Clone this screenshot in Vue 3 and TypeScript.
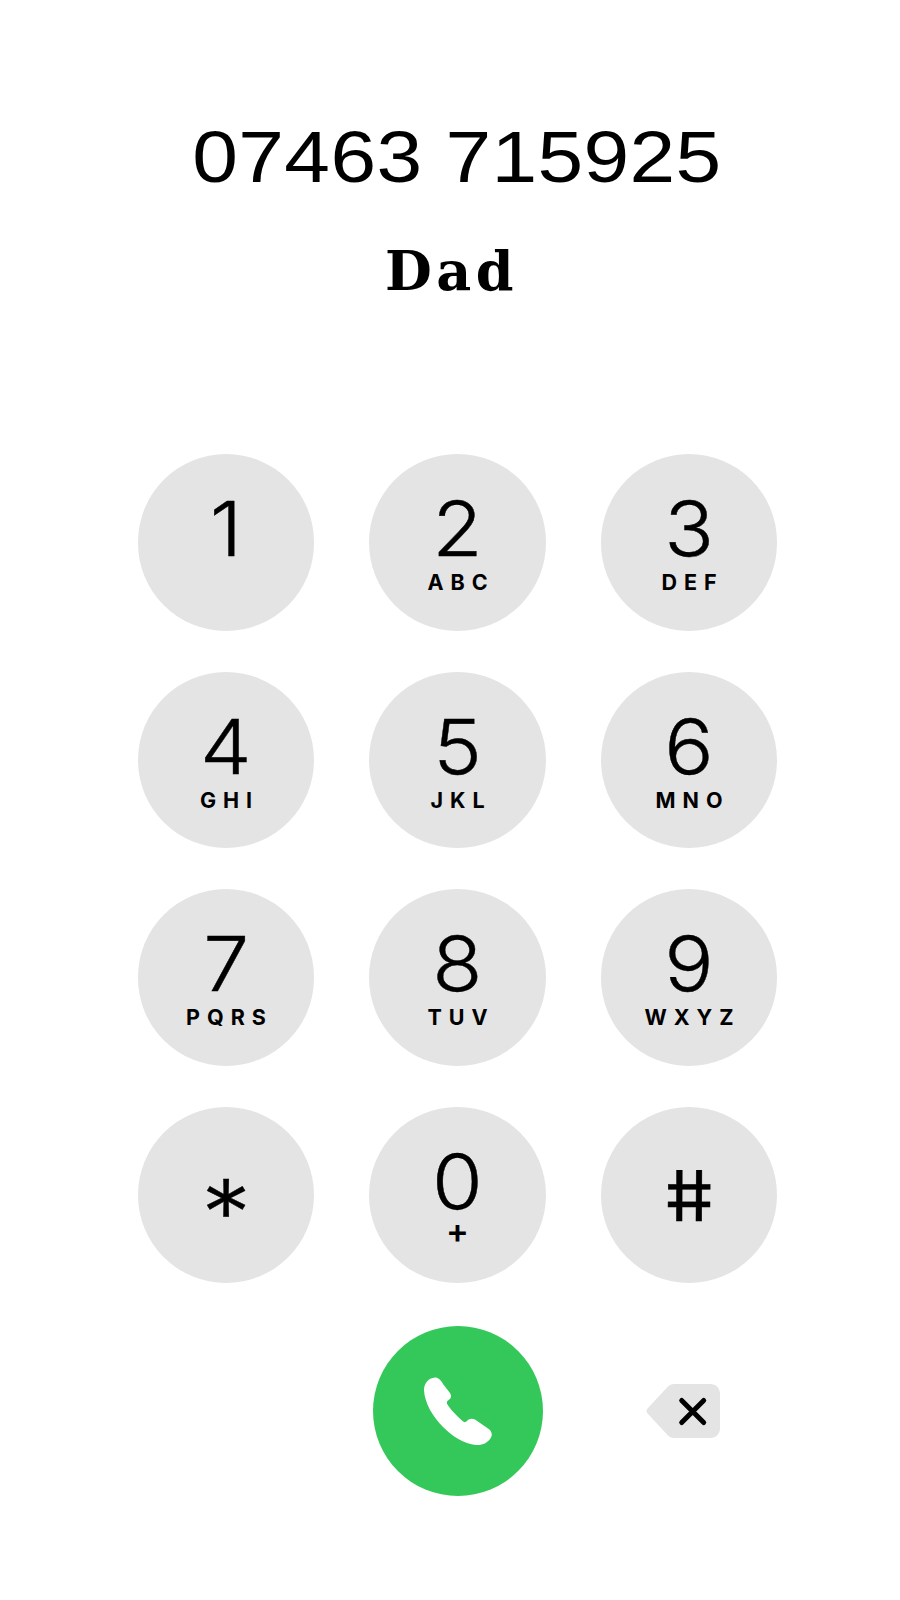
<script setup lang="ts">
interface Key {
	digit: string;
	letters: string;
	kind?: string;
}

const keys: Key[] = [
	{ digit: "1", letters: "" },
	{ digit: "2", letters: "ABC" },
	{ digit: "3", letters: "DEF" },
	{ digit: "4", letters: "GHI" },
	{ digit: "5", letters: "JKL" },
	{ digit: "6", letters: "MNO" },
	{ digit: "7", letters: "PQRS" },
	{ digit: "8", letters: "TUV" },
	{ digit: "9", letters: "WXYZ" },
	{ digit: "*", letters: "", kind: "star" },
	{ digit: "0", letters: "+", kind: "plus" },
	{ digit: "#", letters: "", kind: "hash" },
];
</script>

<template>
	<div class="dialer">
		<div class="number">07463 715925</div>
		<div class="contact">Dad</div>

		<div class="keypad">
			<button v-for="key in keys" :key="key.digit" class="key" :class="key.kind">
				<span class="digit">{{ key.digit }}</span>
				<span v-if="key.letters" class="letters">{{ key.letters }}</span>
			</button>

			<span></span>
			<button class="call">
				<svg class="phone" width="95" height="95" viewBox="0 0 95 95">
					<path
						fill="#fff"
						d="M14 25C14 19 18 13 25 12.500C28 12.500 31 15 33 19L40 28C42 31.500 41 33.500 38 35.500C36.500 36.500 36.500 38 37.500 39.500C40 44 47 51 52.500 56C54 57.500 55.500 57.500 57 56C59 53.500 62 53 65 54.500L78 63.500C82 66 82.500 70 81 72.500C78 78 72 80.500 66 80C54 79 42 71 33 62C23 52 14.500 38 14 25Z"
					/>
				</svg>
			</button>
			<button class="backspace">
				<svg width="76" height="58" viewBox="0 0 76 58">
					<path
						fill="#e4e4e4"
						d="M29 2H65C71 2 75 6 75 12V46C75 52 71 56 65 56H29C26.500 56 24.500 55 23 53.500L3 32C1 30 1 28 3 26L23 4.500C24.500 3 26.500 2 29 2Z"
					/>
					<path
						fill="none"
						stroke="#000"
						stroke-width="5"
						stroke-linecap="round"
						d="M36.700 18.500L58.700 40.500M58.700 18.500L36.700 40.500"
					/>
				</svg>
			</button>
		</div>
	</div>
</template>

<style scoped>
.dialer {
	width: 900px;
	height: 1600px;
	box-sizing: border-box;
	padding-top: 109px;
	background: #fff;
	color: #000;
	display: flex;
	flex-direction: column;
	align-items: center;
	overflow: hidden;
}

.number {
	font-family: "Liberation Sans", Arial, sans-serif;
	font-size: 73px;
	line-height: 96px;
	letter-spacing: 0.300px;
	white-space: nowrap;
	padding-left: 12px;
	transform: scaleX(1.125);
}

.contact {
	font-family: "DejaVu Serif", "Liberation Serif", serif;
	font-weight: 700;
	font-size: 54px;
	line-height: 72px;
	letter-spacing: 4.500px;
	margin-top: 30px;
	padding-left: 3px;
}

.keypad {
	display: grid;
	grid-template-columns: repeat(3, 176.500px);
	grid-auto-rows: 176.500px;
	column-gap: 55px;
	row-gap: 41px;
	margin-top: 147px;
	margin-left: 15px;
}

button {
	border: none;
	padding: 0;
	margin: 0;
	background: none;
	color: inherit;
}

.key {
	border-radius: 50%;
	background: #e4e4e4;
	display: flex;
	flex-direction: column;
	align-items: center;
	font-family: Inter, "Liberation Sans", sans-serif;
	padding-top: 39px;
	box-sizing: border-box;
}

.digit {
	font-size: 76px;
	font-weight: 300;
	line-height: 70px;
	-webkit-text-stroke: 0.4px #000;
	transform: scaleX(1.08);
}

.letters {
	font-size: 21.500px;
	font-weight: 700;
	line-height: 24px;
	letter-spacing: 7px;
	margin-right: -7px;
	margin-top: 7px;
}

.star {
	justify-content: center;
	padding-top: 37px;
}

.star .digit {
	font-size: 92px;
}

.hash {
	justify-content: center;
	padding-top: 3px;
}

.hash .digit {
	font-size: 70px;
	font-weight: 400;
	transform: skewX(10deg) scaleX(1.1);
}

.plus .letters {
	font-size: 34px;
	font-weight: 600;
	letter-spacing: 0;
	margin-right: 0;
	margin-top: 3px;
}

.call {
	justify-self: center;
	align-self: start;
	margin-top: 2px;
	width: 170px;
	height: 170px;
	border-radius: 50%;
	background: #34c85a;
	display: flex;
	align-items: center;
	justify-content: center;
}

.phone {
	margin-top: 3px;
}

.backspace {
	justify-self: start;
	align-self: start;
	margin-top: 58px;
	margin-left: 44px;
	display: flex;
}
</style>
